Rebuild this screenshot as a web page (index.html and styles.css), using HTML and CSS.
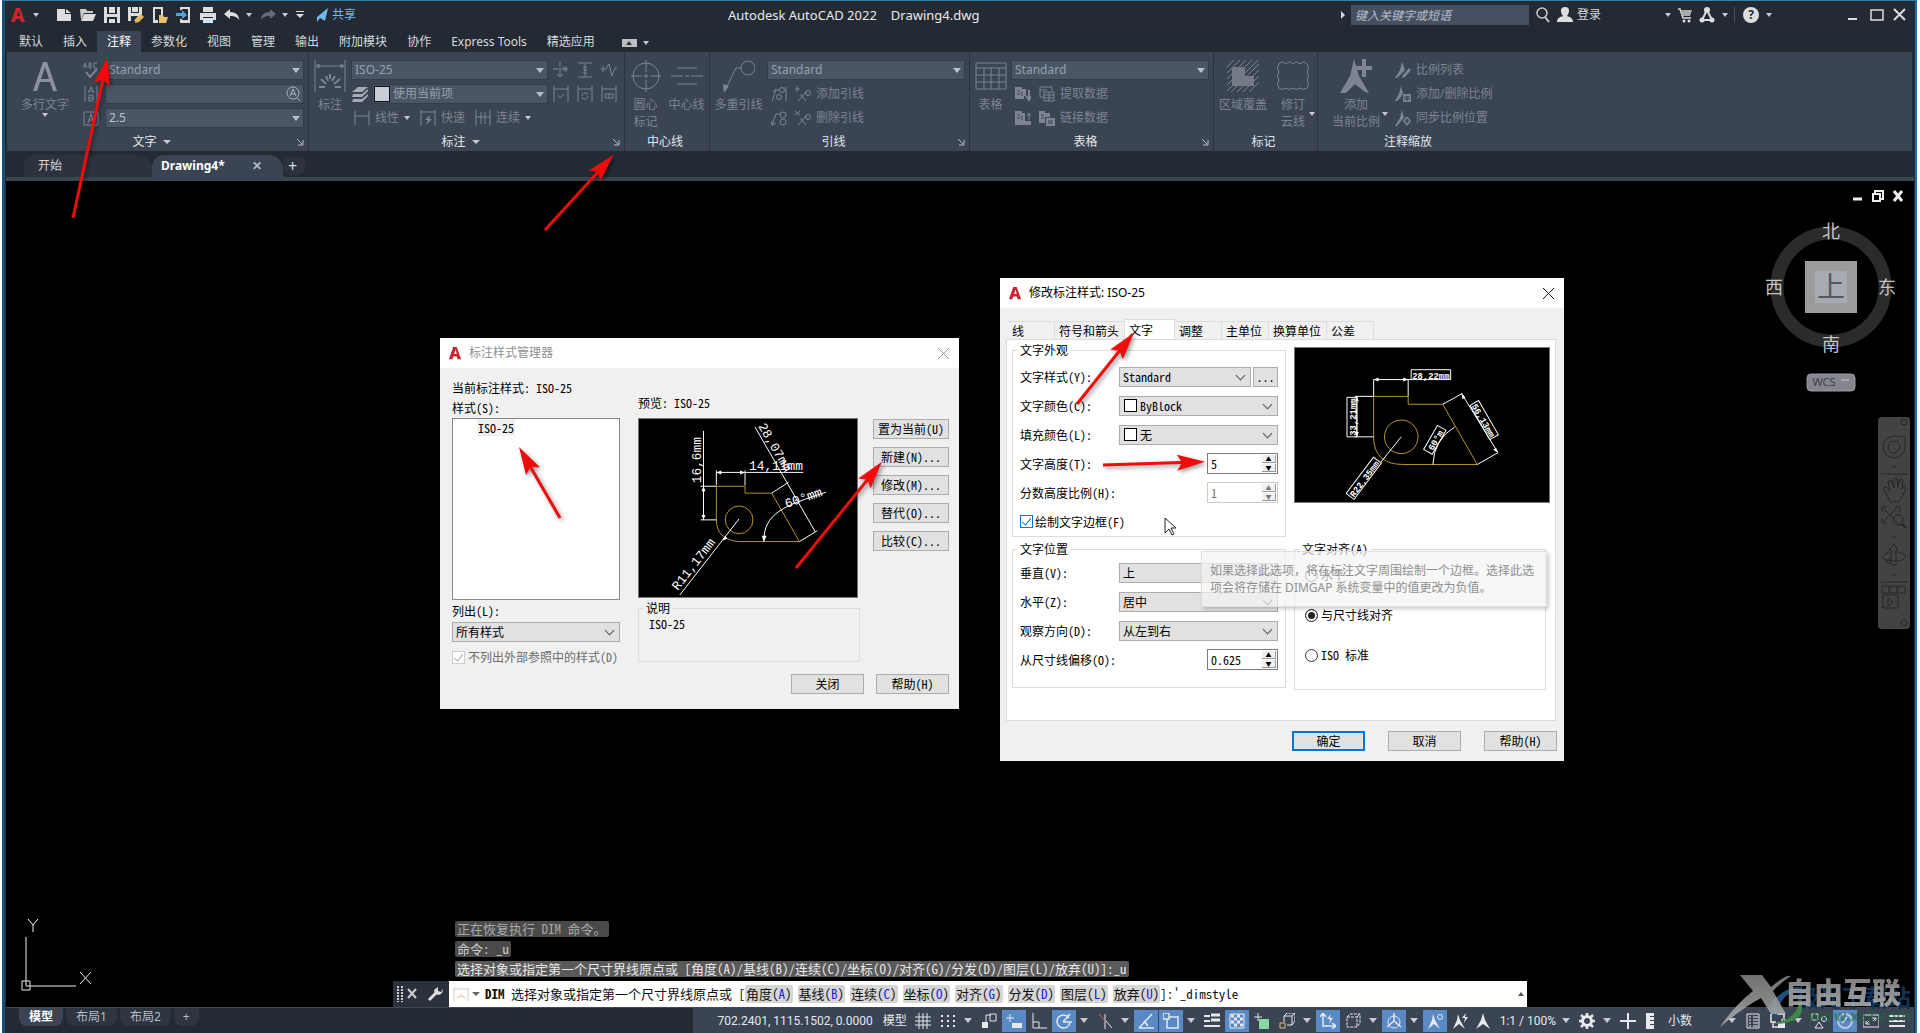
FILE: index.html
```html
<!DOCTYPE html>
<html lang="zh-CN">
<head>
<meta charset="utf-8">
<title>Autodesk AutoCAD 2022 - Drawing4.dwg</title>
<link rel="stylesheet" href="styles.css">
</head>
<body>
<svg class="defs" aria-hidden="true">
  <symbol id="logo" viewBox="0 0 16 16"><path d="M1 15L6 1h4l5 14h-4l-1-3H6l-1 3zM7 9h3L8.500 4z" fill="#c9252d" fill-rule="evenodd"/></symbol>
  <symbol id="new" viewBox="0 0 16 16"><path d="M1 2h8v5h6v7H1zM10 2l5 4h-5z" fill="#ddd"/></symbol>
  <symbol id="open" viewBox="0 0 16 16"><path d="M0 2h6l1 2h6v2H4L1 13z" fill="#ccc"/><path d="M4 7h12l-3 7H1z" fill="#ddd"/></symbol>
  <symbol id="save" viewBox="0 0 16 16"><path d="M0 0h16v16H0z" fill="#ddd"/><path d="M3 0h2v6h6V0h2v7H3zM3 10h10v6h-2v-4H5v4H3z" fill="#232a33"/><path d="M5 12h6v4H5z" fill="#ddd"/></symbol>
  <symbol id="saveas" viewBox="0 0 16 16"><path d="M0 0h14v8l-6 6H0z" fill="#ddd"/><path d="M3 0h1v5h6V0h1v6H3zM3 9h7l-4 5H3z" fill="#232a33"/><path d="M8 12l5-5 3 3-5 5-4 1z" fill="#e8b65a"/></symbol>
  <symbol id="webopen" viewBox="0 0 16 16"><path d="M1 0h10v8H9V2H3v11h3v3H1z" fill="#ddd"/><path d="M7 8h4l1 2h4l-2 6H7z" fill="#e8c069"/></symbol>
  <symbol id="websave" viewBox="0 0 16 16"><path d="M4 0h10v16H4v-4h2v1h6V2H6v1H4z" fill="#ddd"/><path d="M0 6h6V3l5 5-5 4V9H0z" fill="#4fa8dc"/></symbol>
  <symbol id="print" viewBox="0 0 16 16"><path d="M3 0h10v5H3zM0 6h16v7h-3v-3H3v3H0z" fill="#ddd"/><path d="M3 11h10v5H3z" fill="#cfe6f5"/></symbol>
  <symbol id="undo" viewBox="0 0 16 16"><path d="M0 7l6-5v3c6 0 9 3 9 8-2-3-4-4-9-4v3z" fill="#ddd"/></symbol>
  <symbol id="redo" viewBox="0 0 16 16"><path d="M16 7l-6-5v3c-6 0-9 3-9 8 2-3 4-4 9-4v3z" fill="#666c74"/></symbol>
  <symbol id="custom" viewBox="0 0 8 8"><path d="M0 0h8v1H0zM0 3h8L4 7z" fill="#ddd"/></symbol>
  <symbol id="plane" viewBox="0 0 16 16"><path d="M0 9L16 1 5 10v5l3-4 5 3 3-13" fill="#6fb9ef"/></symbol>
  <symbol id="search" viewBox="0 0 16 16"><circle cx="7" cy="6" r="5" fill="none" stroke="#ccc" stroke-width="1.500"/><path d="M10 10l4 5" stroke="#ccc" stroke-width="2"/></symbol>
  <symbol id="user" viewBox="0 0 16 16"><path d="M8 0c5 0 5 5 2 9 3 1 6 2 6 6H0c0-4 3-5 6-6C3 5 3 0 8 0z" fill="#ddd"/></symbol>
  <symbol id="cart" viewBox="0 0 16 16"><path d="M1 2h2l3 9h8" stroke="#ddd" fill="none" stroke-width="1.500"/><path d="M4 3h11l-2 6H6z" fill="#aaa"/><circle cx="7" cy="14" r="1.500" fill="#ddd"/><circle cx="12" cy="14" r="1.500" fill="#ddd"/></symbol>
  <symbol id="apps" viewBox="0 0 16 16"><path d="M8 3L3 13h10z" fill="none" stroke="#ddd" stroke-width="2"/><circle cx="8" cy="3" r="3" fill="#ddd"/><circle cx="3" cy="13" r="2.500" fill="#ddd"/><circle cx="13" cy="13" r="2.500" fill="#ddd"/></symbol>
  <symbol id="mtext" viewBox="0 0 32 34"><path d="M4 32L14 3h4l10 29h-4l-3-9H11l-3 9zM12 20h8l-4-12z" fill="currentColor" fill-rule="evenodd"/></symbol>
  <symbol id="spell" viewBox="0 0 16 16"><path d="M3 10l4 5 7-8" fill="none" stroke="currentColor" stroke-width="2"/><path d="M0 6l2-5 2 5M1 4h2M6 6V1h2v5zM6 3h2M14 1h-3v5h3" stroke="currentColor" fill="none"/></symbol>
  <symbol id="ab" viewBox="0 0 16 16"><path d="M2 0v16M14 0v16M5 7l3-6 3 6M6 5h4M6 9v6h3l1-1V9zM6 12h4" stroke="currentColor" fill="none"/></symbol>
  <symbol id="abox" viewBox="0 0 16 16"><path d="M1 2h14v13H1zM5 13l3-9 3 9M6 10h4" stroke="currentColor" fill="none"/></symbol>
  <symbol id="dimbig" viewBox="0 0 32 34"><path d="M1 1v32M31 1v32M2 7h28M5 5L2 7l3 2zM27 5l3 2-3 2z" stroke="currentColor" fill="none"/><path d="M5 28h6M21 28h6M7 20l5 5M12 17l2 5M16 15v5M21 17l-3 5M26 20l-6 5" stroke="currentColor" stroke-width="2"/></symbol>
  <symbol id="layers" viewBox="0 0 16 16"><path d="M6 1h10l-6 5H0zM1 8h9l6-5v2l-6 6H0zM1 13h9l6-5v2l-6 6H0z" fill="#a5abb4"/></symbol>
  <symbol id="dimlin" viewBox="0 0 16 16"><path d="M1 1v14M15 1v14M1 6h14" stroke="currentColor" fill="none"/></symbol>
  <symbol id="dimquick" viewBox="0 0 16 16"><path d="M1 0v16M15 0v16M1 2h14" stroke="currentColor" fill="none"/><path d="M10 5l-5 5h3l-2 5 6-6H9z" fill="currentColor"/></symbol>
  <symbol id="dimcont" viewBox="0 0 16 16"><path d="M1 0v16M6 2v12M10 2v12M15 0v16M1 7h14" stroke="currentColor" fill="none"/></symbol>
  <symbol id="dbreak" viewBox="0 0 16 16"><path d="M0 7h15M7 0v5M7 8v7M13 4v6M4 12l3 3 3-3M10 5l3 2-3 2" stroke="currentColor" fill="none"/></symbol>
  <symbol id="dspace" viewBox="0 0 16 16"><path d="M1 1h14M1 15h14M8 2v12M6 5h4M6 8h4M6 11h4" stroke="currentColor" fill="none"/></symbol>
  <symbol id="djog" viewBox="0 0 16 16"><path d="M0 7h5l3-5 3 12 3-8h2M2 4v6" stroke="currentColor" fill="none"/></symbol>
  <symbol id="dcheck" viewBox="0 0 16 16"><path d="M1 0v16M15 0v16M1 3h14M5 9l2 3 4-4" stroke="currentColor" fill="none"/></symbol>
  <symbol id="dupd" viewBox="0 0 16 16"><path d="M1 0v16M15 0v16M1 3h14M5 10c0-4 6-4 6-1M11 10c0 4-6 4-6 1" stroke="currentColor" fill="none"/></symbol>
  <symbol id="dtol" viewBox="0 0 16 16"><path d="M1 0v16M15 0v16M1 3h14M4 8h8v4H4zM8 8v4" stroke="currentColor" fill="none"/></symbol>
  <symbol id="cmark" viewBox="0 0 32 34"><circle cx="16" cy="17" r="13" fill="none" stroke="currentColor"/><path d="M16 1v12M16 15v4M16 21v12M1 17h11M14 17h4M20 17h11" stroke="currentColor"/></symbol>
  <symbol id="cline" viewBox="0 0 32 34"><path d="M6 9h20M0 17h12M14 17h4M20 17h12M6 25h20" stroke="currentColor"/></symbol>
  <symbol id="mleader" viewBox="0 0 32 34"><circle cx="25" cy="9" r="7" fill="none" stroke="currentColor"/><path d="M18 9h-5L3 29" fill="none" stroke="currentColor"/><path d="M0 25l6 2-5 7z" fill="currentColor"/></symbol>
  <symbol id="ldr" viewBox="0 0 16 16"><path d="M1 15L5 4h4M2 6l3-3M15 1v14" fill="none" stroke="currentColor"/><circle cx="11" cy="4" r="2.500" fill="none" stroke="currentColor"/><circle cx="8" cy="11" r="2.500" fill="none" stroke="currentColor"/></symbol>
  <symbol id="ldr2" viewBox="0 0 16 16"><path d="M1 15L5 4h4M0 11l1 4 4-2" fill="none" stroke="currentColor"/><circle cx="12" cy="5" r="3" fill="none" stroke="currentColor"/><circle cx="12" cy="12" r="3" fill="none" stroke="currentColor"/></symbol>
  <symbol id="ldradd" viewBox="0 0 16 16"><path d="M0 3h5M2 0v6M3 15l7-8h2M5 8l6 7" fill="none" stroke="currentColor"/><circle cx="13" cy="7" r="2.500" fill="none" stroke="currentColor"/></symbol>
  <symbol id="ldrdel" viewBox="0 0 16 16"><path d="M0 1l5 4M5 1L0 5M3 15l7-8h2M5 8l6 7" fill="none" stroke="currentColor"/><circle cx="13" cy="7" r="2.500" fill="none" stroke="currentColor"/></symbol>
  <symbol id="table" viewBox="0 0 32 34"><path d="M1 4h30v26H1zM1 9h30M1 16h30M1 23h30M9 9v21M16 9v21M24 9v21" fill="none" stroke="currentColor"/></symbol>
  <symbol id="tdown" viewBox="0 0 16 16"><path d="M0 1h7v2h4v7H9v3H0z" fill="currentColor"/><path d="M2 5h3M2 8h3M7 6v4" stroke="#3b4453"/><path d="M14 4v8M11 10l3 4 2-4" stroke="currentColor" stroke-width="2" fill="none"/></symbol>
  <symbol id="tup" viewBox="0 0 16 16"><path d="M0 1h7v2h3v8h6v4H0z" fill="currentColor"/><path d="M2 5h3M2 8h3M7 6v4" stroke="#3b4453"/><path d="M14 3v7M12 6l2-3 2 3" stroke="currentColor" fill="none"/></symbol>
  <symbol id="tlink" viewBox="0 0 16 16"><path d="M0 1h6v2h5v4H6v6H0z" fill="currentColor"/><path d="M2 5h3M2 8h3" stroke="#3b4453"/><path d="M7 8h9v8H7z" fill="currentColor"/><path d="M9 11h5M9 13h5" stroke="#3b4453"/></symbol>
  <symbol id="textract" viewBox="0 0 16 16"><path d="M1 1h12v4M1 1v10h4M1 4h7M5 6h10v9H5zM5 9h10M5 12h10M10 6v9" fill="none" stroke="currentColor"/></symbol>
  <symbol id="wipe" viewBox="0 0 32 34"><path d="M0 8l7-7M0 14L13 1M0 20L19 1M0 26L25 1M0 32L31 1M4 33L32 5M10 33l22-22M16 33l16-16M22 33l10-10" stroke="currentColor"/><path d="M5 8h13v9h9v10H5z" fill="#737b87"/></symbol>
  <symbol id="cloud" viewBox="0 0 32 34"><path d="M2 5q3-4 7 0q3-4 7 0q3-4 7 0q4-4 7 0q3 3 0 8q3 4 0 8q3 4 0 8q-4 3-7 0q-4 3-7 0q-4 3-7 0q-4 3-7 0q-3-4 0-8q-3-4 0-8q-3-4 0-8z" fill="none" stroke="currentColor"/></symbol>
  <symbol id="annobig" viewBox="0 0 32 34"><path d="M14 0l5 17 10 17-4-1-10-8-9 9H0l10-17z" fill="currentColor"/><path d="M24 0v18M16 9h16" stroke="currentColor" stroke-width="4"/></symbol>
  <symbol id="anno1" viewBox="0 0 16 16"><path d="M7 0l3 8-3 3-5 5H0l5-8zM14 6l2 2-6 7-3 1 1-3z" fill="currentColor"/></symbol>
  <symbol id="anno2" viewBox="0 0 16 16"><path d="M6 0l2 7-2 4-4 4H0l4-7z" fill="currentColor"/><path d="M8 8h8v8H8z" fill="currentColor"/><path d="M9 11h6M9 13h6M12 10v5" stroke="#3b4453"/></symbol>
  <symbol id="anno3" viewBox="0 0 16 16"><path d="M7 0l2 8-3 3-4 5H0l5-8z" fill="currentColor"/><path d="M12 7l-3 4 3 4M12 7l3 4-3 4" stroke="currentColor" fill="none" stroke-width="1.500"/></symbol>
  <symbol id="launch" viewBox="0 0 8 8"><path d="M1 1l5 5M7 2v5H2" stroke="#b8bec6" fill="none"/></symbol>
  <symbol id="s-grid" viewBox="0 0 16 16"><path d="M4 0v16M8 0v16M12 0v16M0 4h16M0 8h16M0 12h16" stroke="currentColor"/></symbol>
  <symbol id="s-dots" viewBox="0 0 16 16"><path d="M1 3h14M1 8h14M1 13h14" stroke="currentColor" stroke-width="2" stroke-dasharray="2 4"/></symbol>
  <symbol id="s-infer" viewBox="0 0 16 16"><path d="M1 9h6v6H1z" fill="currentColor"/><path d="M5 9V2h5M9 1h6v7H9z" stroke="currentColor" fill="none"/></symbol>
  <symbol id="s-dyn" viewBox="0 0 16 16"><path d="M0 5h8M4 1v8" stroke="currentColor"/><path d="M6 10h10v5H6z" fill="currentColor"/></symbol>
  <symbol id="s-ortho" viewBox="0 0 16 16"><path d="M2 0v15h14M2 9h6v6" stroke="currentColor" fill="none"/></symbol>
  <symbol id="s-polar" viewBox="0 0 16 16"><path d="M13 5a6.500 6.500 0 1 0 1 4M7 9h9M7 9l7-8" stroke="currentColor" fill="none" stroke-width="1.500"/></symbol>
  <symbol id="s-iso" viewBox="0 0 16 16"><path d="M8 1v15M9 8l6 7" stroke="currentColor"/><path d="M2 1l6 7" stroke="#d66"/></symbol>
  <symbol id="s-track" viewBox="0 0 16 16"><path d="M1 15L14 1M1 15h15M6 8l4 5" stroke="currentColor" stroke-width="1.500"/></symbol>
  <symbol id="s-osnap" viewBox="0 0 16 16"><path d="M6 4h9v11H4V6M0 0h6v6H0z" stroke="currentColor" fill="none" stroke-width="1.500"/></symbol>
  <symbol id="s-lwt" viewBox="0 0 16 16"><path d="M0 3h6M0 8h6M0 13h16" stroke="currentColor" stroke-width="2"/><path d="M7 2h9M7 7h9" stroke="currentColor" stroke-width="3"/></symbol>
  <symbol id="s-trans" viewBox="0 0 16 16"><path d="M1 1h14v14H1z" stroke="currentColor" fill="none"/><path d="M2 3h12M2 9h12" stroke="currentColor" stroke-width="3" stroke-dasharray="3 3"/><path d="M5 6h10M5 12h10" stroke="currentColor" stroke-width="3" stroke-dasharray="3 3"/></symbol>
  <symbol id="s-cyc" viewBox="0 0 16 16"><path d="M0 4h8M4 0v8" stroke="currentColor"/><path d="M5 6h10v10H5z" fill="#86d9a5"/></symbol>
  <symbol id="s-cube" viewBox="0 0 16 16"><path d="M5 3l3-3h8v8l-3 4H8M5 3v6M5 3h8v9M13 3l3-3" stroke="currentColor" fill="none"/><path d="M1 10h5v5H1z" stroke="#e8b878" fill="none"/></symbol>
  <symbol id="s-ducs" viewBox="0 0 16 16"><path d="M3 1v12h12M0 4l3-4 3 4M12 10l4 3-4 3" stroke="currentColor" fill="none" stroke-width="1.500"/><path d="M11 1L7 6h3l-1 5 4-6h-3z" fill="currentColor"/></symbol>
  <symbol id="s-filt" viewBox="0 0 16 16"><path d="M2 4l3-3h10v9l-3 4H2zM2 4h10v10M12 4l3-3" stroke="currentColor" fill="none" stroke-dasharray="3 1"/></symbol>
  <symbol id="s-gizmo" viewBox="0 0 16 16"><circle cx="8" cy="9" r="6" stroke="currentColor" fill="none"/><path d="M8 0v8l-7 6M8 8l7 6" stroke="currentColor" fill="none" stroke-width="1.500"/></symbol>
  <symbol id="s-anno" viewBox="0 0 16 16"><path d="M8 0l2 7 5 9-7-5-7 5 5-9z" fill="currentColor"/></symbol>
  <symbol id="s-annov" viewBox="0 0 16 16"><path d="M6 1l2 6 5 9-6-5-6 5 4-9z" fill="currentColor"/><circle cx="13" cy="4" r="2.500" stroke="currentColor" fill="none"/></symbol>
  <symbol id="s-annoa" viewBox="0 0 16 16"><path d="M6 1l2 6 5 9-6-5-6 5 4-9zM14 0l-4 5h3l-1 5 4-6h-3z" fill="currentColor"/></symbol>
  <symbol id="s-gear" viewBox="0 0 16 16"><circle cx="8" cy="8" r="4.500" stroke="currentColor" fill="none" stroke-width="3"/><path d="M8 0v3M8 13v3M0 8h3M13 8h3M2 2l3 3M11 11l3 3M14 2l-3 3M2 14l3-3" stroke="currentColor" stroke-width="2.500"/></symbol>
  <symbol id="s-plus" viewBox="0 0 16 16"><path d="M8 0v16M0 8h16" stroke="currentColor" stroke-width="2"/></symbol>
  <symbol id="s-ruler" viewBox="0 0 16 16"><path d="M4 0h8v3H8v1h4v3H8v1h4v3H8v1h4v4H4z" fill="currentColor"/></symbol>
  <symbol id="s-prop" viewBox="0 0 16 16"><path d="M2 1h12v14H2zM4 4h2M8 4h5M4 7h2M8 7h5M4 10h2M8 10h5M4 13h2M8 13h5" stroke="currentColor" fill="none"/></symbol>
  <symbol id="s-lock" viewBox="0 0 16 16"><path d="M1 1h13v4M1 1v8h5M3 9v5h5" stroke="currentColor" fill="none" stroke-width="1.500"/><path d="M8 9h7v6H8z" fill="currentColor"/><path d="M12 9V6h3v2" stroke="currentColor" fill="none"/></symbol>
  <symbol id="s-iso2" viewBox="0 0 16 16"><path d="M1 1h6v6H1zM8 9l4 6H4z" stroke="currentColor" fill="none"/><circle cx="13" cy="6" r="2.500" stroke="currentColor" fill="none"/></symbol>
  <symbol id="s-perf" viewBox="0 0 16 16"><circle cx="8" cy="8" r="7" stroke="#b4c8dc" fill="none" stroke-width="2"/><path d="M5 10l5-6" stroke="#b4c8dc" stroke-width="2"/></symbol>
  <symbol id="s-full" viewBox="0 0 16 16"><path d="M0 2h16v12H0zM9 5h4v3M13 5l-3 3M3 8v3h4M3 11l3-3" stroke="currentColor" fill="none"/></symbol>
  <symbol id="s-menu" viewBox="0 0 16 16"><path d="M0 3h16M0 8h16M0 13h16" stroke="currentColor" stroke-width="2"/></symbol>
</svg>

<div class="window">
  <header class="titlebar">
    <div class="quick">
      <button class="app" aria-label="应用程序"><svg><use href="#logo"/></svg><i class="caret"></i></button>
      <button class="q" aria-label="新建"><svg><use href="#new"/></svg></button>
      <button class="q" aria-label="打开"><svg><use href="#open"/></svg></button>
      <button class="q" aria-label="保存"><svg><use href="#save"/></svg></button>
      <button class="q" aria-label="另存为"><svg><use href="#saveas"/></svg></button>
      <button class="q" aria-label="从 Web 打开"><svg><use href="#webopen"/></svg></button>
      <button class="q" aria-label="保存到 Web"><svg><use href="#websave"/></svg></button>
      <button class="q" aria-label="打印"><svg><use href="#print"/></svg></button>
      <button class="q wide" aria-label="放弃"><svg><use href="#undo"/></svg><i class="caret"></i></button>
      <button class="q wide" aria-label="重做"><svg><use href="#redo"/></svg><i class="caret"></i></button>
      <button class="q narrow" aria-label="自定义"><svg><use href="#custom"/></svg></button>
      <button class="share"><svg><use href="#plane"/></svg>共享</button>
    </div>
    <h1 class="doc-title"><span>Autodesk AutoCAD 2022</span><span>Drawing4.dwg</span></h1>
    <div class="account">
      <i class="caret right"></i>
      <input class="help-search" type="text" placeholder="键入关键字或短语" aria-label="搜索">
      <button aria-label="搜索"><svg><use href="#search"/></svg></button>
      <button class="login"><svg><use href="#user"/></svg>登录</button>
      <i class="caret"></i>
      <button aria-label="商店"><svg><use href="#cart"/></svg></button>
      <button class="drop" aria-label="应用"><svg><use href="#apps"/></svg><i class="caret"></i></button>
      <button class="drop help" aria-label="帮助"><b>?</b><i class="caret"></i></button>
    </div>
    <div class="wincontrols">
      <button aria-label="最小化"><svg viewBox="0 0 14 14"><path d="M1 11h9" stroke="#ddd" stroke-width="2"/></svg></button>
      <button aria-label="最大化"><svg viewBox="0 0 14 14"><path d="M1 2h12v10H1z" fill="none" stroke="#ddd" stroke-width="1.500"/></svg></button>
      <button aria-label="关闭"><svg viewBox="0 0 14 14"><path d="M1 1l11 11M12 1L1 12" stroke="#ddd" stroke-width="2"/></svg></button>
    </div>
  </header>

  <nav class="menu">
    <a href="#">默认</a><a href="#">插入</a><a href="#" class="on">注释</a><a href="#">参数化</a><a href="#">视图</a><a href="#">管理</a><a href="#">输出</a><a href="#">附加模块</a><a href="#">协作</a><a href="#">Express Tools</a><a href="#">精选应用</a>
    <button class="collapse" aria-label="最小化功能区"><span></span><i class="caret"></i></button>
  </nav>

  <section class="ribbon">
    <div class="panel p-text">
      <div class="tools">
        <button class="big"><svg class="strong"><use href="#mtext"/></svg>多行文字<i class="caret"></i></button>
        <div class="stack icons"><svg><use href="#spell"/></svg><svg><use href="#ab"/></svg><svg><use href="#abox"/></svg></div>
        <div class="stack grow">
          <div class="combo"><select aria-label="文字样式"><option>Standard</option></select></div>
          <div class="combo find"><input type="text" aria-label="查找文字"><svg viewBox="0 0 16 16"><circle cx="8" cy="7" r="6" fill="none" stroke="#aab2bd"/><path d="M5 10l3-7 3 7M6 8h4M12 12l3 3" stroke="#aab2bd" fill="none"/></svg></div>
          <div class="combo light"><select aria-label="文字高度"><option>2.5</option></select></div>
        </div>
      </div>
      <footer><span>文字<i class="caret"></i></span><svg><use href="#launch"/></svg></footer>
    </div>
    <div class="panel p-dim">
      <div class="tools">
        <button class="big"><svg><use href="#dimbig"/></svg>标注</button>
        <div class="stack grow">
          <div class="combo"><select aria-label="标注样式"><option>ISO-25</option></select></div>
          <div class="line tight"><svg><use href="#layers"/></svg><div class="combo swatch"><i></i><select aria-label="标注图层"><option>使用当前项</option></select></div></div>
          <div class="line dims"><button><svg><use href="#dimlin"/></svg>线性<i class="caret"></i></button><button><svg><use href="#dimquick"/></svg>快速</button><button><svg><use href="#dimcont"/></svg>连续<i class="caret"></i></button></div>
        </div>
        <div class="icongrid"><svg><use href="#dbreak"/></svg><svg><use href="#dspace"/></svg><svg><use href="#djog"/></svg><svg><use href="#dcheck"/></svg><svg><use href="#dupd"/></svg><svg><use href="#dtol"/></svg></div>
      </div>
      <footer><span>标注<i class="caret"></i></span><svg><use href="#launch"/></svg></footer>
    </div>
    <div class="panel p-center">
      <div class="tools">
        <button class="big"><svg><use href="#cmark"/></svg>圆心<br>标记</button>
        <button class="big"><svg><use href="#cline"/></svg>中心线</button>
      </div>
      <footer><span>中心线</span></footer>
    </div>
    <div class="panel p-leader">
      <div class="tools">
        <button class="big"><svg><use href="#mleader"/></svg>多重引线</button>
        <div class="stack grow">
          <div class="combo"><select aria-label="多重引线样式"><option>Standard</option></select></div>
          <div class="line"><svg><use href="#ldr"/></svg><button><svg><use href="#ldradd"/></svg>添加引线</button></div>
          <div class="line"><svg><use href="#ldr2"/></svg><button><svg><use href="#ldrdel"/></svg>删除引线</button></div>
        </div>
      </div>
      <footer><span>引线</span><svg><use href="#launch"/></svg></footer>
    </div>
    <div class="panel p-table">
      <div class="tools">
        <button class="big"><svg><use href="#table"/></svg>表格</button>
        <div class="stack grow">
          <div class="combo"><select aria-label="表格样式"><option>Standard</option></select></div>
          <div class="line"><svg><use href="#tdown"/></svg><button><svg><use href="#textract"/></svg>提取数据</button></div>
          <div class="line"><svg><use href="#tup"/></svg><button><svg><use href="#tlink"/></svg>链接数据</button></div>
        </div>
      </div>
      <footer><span>表格</span><svg><use href="#launch"/></svg></footer>
    </div>
    <div class="panel p-mark">
      <div class="tools">
        <button class="big"><svg><use href="#wipe"/></svg>区域覆盖</button>
        <button class="big side"><svg><use href="#cloud"/></svg>修订<br>云线<i class="caret"></i></button>
      </div>
      <footer><span>标记</span></footer>
    </div>
    <div class="panel p-anno">
      <div class="tools">
        <button class="big side"><svg><use href="#annobig"/></svg>添加<br>当前比例<i class="caret"></i></button>
        <div class="stack grow">
          <div class="line"><button><svg><use href="#anno1"/></svg>比例列表</button></div>
          <div class="line"><button><svg><use href="#anno2"/></svg>添加/删除比例</button></div>
          <div class="line"><button><svg><use href="#anno3"/></svg>同步比例位置</button></div>
        </div>
      </div>
      <footer><span>注释缩放</span></footer>
    </div>
  </section>

  <nav class="doctabs">
    <a href="#" class="start">开始</a>
    <a href="#" class="active">Drawing4*<i>✕</i></a>
    <button class="add" aria-label="新图形">+</button>
  </nav>

  <main class="canvas">
    <div class="viewcontrols">
      <svg viewBox="0 0 12 12"><path d="M1 9h9" stroke="#eee" stroke-width="3"/></svg>
      <svg viewBox="0 0 12 12"><path d="M3 3V1h8v8H9M1 4h7v7H1z" fill="none" stroke="#eee" stroke-width="2"/></svg>
      <svg viewBox="0 0 12 12"><path d="M2 1l8 10M10 1L2 11" stroke="#eee" stroke-width="3"/></svg>
    </div>

    <svg class="viewcube" viewBox="0 0 140 180">
      <circle cx="70" cy="70" r="54" fill="none" stroke="#2b2b2b" stroke-width="13"/>
      <path d="M44 44h52v52H44z" fill="#9b9b9b"/><path d="M54 54h32v32H54z" fill="#a8aab2"/>
      <text x="70" y="21">北</text><text x="13" y="77">西</text><text x="126" y="77">东</text><text x="70" y="134">南</text>
      <text x="70" y="80" class="face">上</text>
      <rect x="46" y="157" width="48" height="17" rx="4" fill="#85858e" stroke="#9a9aa2"/>
      <text x="63" y="169" class="wcs">WCS</text><path d="M80 163h8" stroke="#a9a9b2" stroke-width="2"/>
    </svg>

    <aside class="navbar">
      <svg viewBox="0 0 32 212">
        <circle cx="26" cy="5" r="3"/><path d="M27 20v10a11 11 0 1 1-11-11z"/><circle cx="16" cy="30" r="6"/><path d="M14 50h4M3 57h26M14 120h4M14 158h4M3 165h26" />
        <path d="M9 78l-4-7 3-1 4 4-2-10 3-1 3 8V61h3l1 9 2-8 3 1-1 9 3-4 1 3-4 9-4 5h-8z"/>
        <path d="M5 91l18 18M19 91L5 105M4 95v-5h5M17 90h5v5M4 101v5h5"/><circle cx="20" cy="103" r="5"/><path d="M24 107l4 4" stroke-width="2"/>
        <path d="M13 148v-15h-2l5-6 4 6h-2v15zM11 135c-10 4-8 9 5 9s16-6 5-9M12 141l-4 3 4 3"/>
        <path d="M4 169h7v7H4zM12 169h7v7h-7zM20 169h7v7h-7zM5 178h15v13H5zM10 181l5 4-5 4z"/><circle cx="26" cy="206" r="3"/>
      </svg>
    </aside>

    <svg class="ucs" viewBox="0 0 76 70"><path d="M8 3l5 6 5-6M13 9v7M6 21v49M6 70h50M2 65h8v9H2zM60 56l11 12M71 56L60 68" fill="none" stroke="#eee"/></svg>

    <section class="dialog manager" aria-label="标注样式管理器">
      <header><svg><use href="#logo"/></svg><h2>标注样式管理器</h2><button class="x" aria-label="关闭窗口"><svg viewBox="0 0 12 12"><path d="M0 0l12 12M12 0L0 12" stroke="currentColor"/></svg></button></header>
      <div class="cols">
        <div class="left">
          <p>当前标注样式: ISO-25</p>
          <p>样式(S):</p>
          <ul class="list"><li><span>ISO-25</span></li></ul>
          <label class="lbl" for="list-of">列出(L):</label>
          <div class="drop-field"><select id="list-of"><option>所有样式</option></select></div>
          <label class="check muted"><input type="checkbox" checked disabled>不列出外部参照中的样式(D)</label>
        </div>
        <div class="mid">
          <p>预览: ISO-25</p>
          <svg class="preview" viewBox="0 0 220 180">
            <path d="M78 102V68h29v7h27l28 49h-61Q78 122 78 102z" class="y"/><circle cx="101" cy="102" r="14" class="y"/>
            <path d="M78 67V52M107 67V52M78 54h88M65 12v90M62 68h16M62 102h16M117 8l61 106M134 75l17-11M162 124l18-11M126 124C126 95 146 88 189 74M101 101L41 178"/>
            <path d="M78 54l5-2v4zM107 54l-5-2v4zM65 68l-2 5h4zM65 102l-2-5h4zM126 124l-2-6h5zM84 123l5-2-2-3z" class="f"/>
            <text x="111" y="52">14,11mm</text>
            <text transform="translate(62 65) rotate(-90)">16,6mm</text>
            <text transform="translate(120 7) rotate(60)">28,07mm</text>
            <text transform="translate(149 90) rotate(-19)">60°mm</text>
            <text transform="translate(39 174) rotate(-52)">R11,17mm</text>
          </svg>
          <fieldset><legend>说明</legend><p>ISO-25</p></fieldset>
        </div>
        <div class="side-buttons">
          <button>置为当前(U)</button><button>新建(N)...</button><button>修改(M)...</button><button>替代(O)...</button><button>比较(C)...</button>
        </div>
      </div>
      <div class="actions"><button>关闭</button><button>帮助(H)</button></div>
    </section>

    <section class="dialog modify" aria-label="修改标注样式">
      <header><svg><use href="#logo"/></svg><h2>修改标注样式: ISO-25</h2><button class="x" aria-label="关闭窗口"><svg viewBox="0 0 12 12"><path d="M0 0l12 12M12 0L0 12" stroke="currentColor"/></svg></button></header>
      <div class="tabs">
        <button>线</button><button>符号和箭头</button><button class="on">文字</button><button>调整</button><button>主单位</button><button>换算单位</button><button>公差</button>
      </div>
      <div class="page">
        <fieldset class="look"><legend>文字外观</legend>
          <div class="row"><label for="f-style">文字样式(Y):</label><div class="drop-field"><select id="f-style"><option>Standard</option></select></div><button class="more">...</button></div>
          <div class="row"><label for="f-color">文字颜色(C):</label><div class="drop-field boxed"><select id="f-color"><option>ByBlock</option></select></div></div>
          <div class="row"><label for="f-fill">填充颜色(L):</label><div class="drop-field boxed"><select id="f-fill"><option>无</option></select></div></div>
          <div class="row"><label for="f-height">文字高度(T):</label><div class="spin"><input id="f-height" type="text" value="5"><span><button aria-label="增加">▲</button><button aria-label="减少">▼</button></span></div></div>
          <div class="row"><label for="f-frac">分数高度比例(H):</label><div class="spin off"><input id="f-frac" type="text" value="1" disabled><span><button disabled aria-label="增加">▲</button><button disabled aria-label="减少">▼</button></span></div></div>
          <label class="row check"><input type="checkbox" checked>绘制文字边框(F)</label>
        </fieldset>
        <svg class="preview" viewBox="0 0 256 156">
          <path d="M79 90V49h35v8h35l35 61h-75Q79 118 79 90z" class="y"/><circle cx="107" cy="90" r="17" class="y"/>
          <path d="M79 49V32h38M114 49V32M62 49v41M60 49h19M60 90h19M168 46l37 60M149 57l20-11M184 118l21-12M139 118Q140 93 161 80M107 90L86 116"/>
          <path d="M79 32l5-2v4zM114 32l-5-2v4zM62 49l-2 5h4zM62 90l-2-5h4zM168 46l1 6 3-2zM205 106l-5-3 3-2z" class="f"/>
          <g transform="translate(137 27)"><path d="M-20-5h40V5h-40z"/><text y="4">28,22mm</text></g>
          <g transform="translate(57 70) rotate(-90)"><path d="M-20-5h40V5h-40z"/><text y="4">33,21mm</text></g>
          <g transform="translate(191 73) rotate(60)"><path d="M-20-5h40V5h-40z"/><text y="4">56,13mm</text></g>
          <g transform="translate(141 93) rotate(-60)"><path d="M-14-5h28V5h-28z"/><text y="4">60°m</text></g>
          <g transform="translate(69 132) rotate(-53)"><path d="M-23-5h46V5h-46z"/><text y="4">R22,35mm</text></g>
        </svg>
        <fieldset class="place"><legend>文字位置</legend>
          <div class="row"><label for="f-v">垂直(V):</label><div class="drop-field"><select id="f-v"><option>上</option></select></div></div>
          <div class="row"><label for="f-h">水平(Z):</label><div class="drop-field"><select id="f-h"><option>居中</option></select></div></div>
          <div class="row"><label for="f-d">观察方向(D):</label><div class="drop-field"><select id="f-d"><option>从左到右</option></select></div></div>
          <div class="row"><label for="f-o">从尺寸线偏移(O):</label><div class="spin"><input id="f-o" type="text" value="0.625"><span><button aria-label="增加">▲</button><button aria-label="减少">▼</button></span></div></div>
        </fieldset>
        <fieldset class="align"><legend>文字对齐(A)</legend>
          <label><input type="radio" name="al">水平</label>
          <label><input type="radio" name="al" checked>与尺寸线对齐</label>
          <label><input type="radio" name="al">ISO 标准</label>
        </fieldset>
      </div>
      <div class="actions"><button class="default">确定</button><button>取消</button><button>帮助(H)</button></div>
      <div class="tooltip" role="tooltip">如果选择此选项，将在标注文字周围绘制一个边框。选择此选项会将存储在 DIMGAP 系统变量中的值更改为负值。</div>
      <svg class="cursor" viewBox="0 0 13 20"><path d="M1 1v15l4-4 3 6 2-1-3-6h5z" fill="#fff" stroke="#222"/></svg>
    </section>

    <div class="command">
      <p class="h1">正在恢复执行 DIM 命令。</p>
      <p class="h2">命令: _u</p>
      <p class="h3">选择对象或指定第一个尺寸界线原点或 [角度(A)/基线(B)/连续(C)/坐标(O)/对齐(G)/分发(D)/图层(L)/放弃(U)]:_u</p>
      <div class="cmdline">
        <div class="grip">
          <svg viewBox="0 0 56 26"><path d="M5 5v16M9 5v16" stroke="#ccc" stroke-width="2" stroke-dasharray="2 1"/><path d="M15 8l8 9M23 8l-8 9" stroke="#ccc" stroke-width="2"/><path d="M36 19l8-8" stroke="#ddd" stroke-width="3"/><path d="M41 9l4-3v4l3 1 2-3c0 5-4 7-8 5z" fill="#ddd"/></svg>
        </div>
        <svg class="cmdicon" viewBox="0 0 16 16"><path d="M1 1v14M15 1v14M1 3h14" stroke="#ccc" fill="none"/><path d="M4 12l3-2M8 8v3M12 12l-3-2" stroke="#e6b478"/></svg><i class="caret dark"></i>
        <div class="prompt"><b>DIM</b> 选择对象或指定第一个尺寸界线原点或 [<button>角度(<em>A</em>)</button><button>基线(<em>B</em>)</button><button>连续(<em>C</em>)</button><button>坐标(<em>O</em>)</button><button>对齐(<em>G</em>)</button><button>分发(<em>D</em>)</button><button>图层(<em>L</em>)</button><button>放弃(<em>U</em>)</button>]:</div>
        <input type="text" aria-label="命令" value="'_dimstyle">
        <i class="caret up"></i>
      </div>
    </div>
  </main>

  <footer class="bottom">
    <nav class="layouts"><a href="#" class="on">模型</a><a href="#">布局1</a><a href="#">布局2</a><a href="#" class="plus">+</a></nav>
    <div class="status">
      <span class="coords">702.2401, 1115.1502, 0.0000</span>
      <button class="word">模型</button>
      <div class="g"><button aria-label="栅格"><svg><use href="#s-grid"/></svg></button><button aria-label="捕捉"><svg><use href="#s-dots"/></svg></button><i class="caret"></i></div>
      <div class="g"><button aria-label="推断约束"><svg><use href="#s-infer"/></svg></button><button class="on" aria-label="动态输入"><svg><use href="#s-dyn"/></svg></button><button aria-label="正交"><svg><use href="#s-ortho"/></svg></button><button class="on" aria-label="极轴"><svg><use href="#s-polar"/></svg></button><i class="caret"></i></div>
      <div class="g"><button aria-label="等轴测"><svg><use href="#s-iso"/></svg></button><i class="caret"></i></div>
      <div class="g"><button class="on" aria-label="追踪"><svg><use href="#s-track"/></svg></button><button class="on" aria-label="对象捕捉"><svg><use href="#s-osnap"/></svg></button><i class="caret"></i></div>
      <div class="g"><button aria-label="线宽"><svg><use href="#s-lwt"/></svg></button><button class="on" aria-label="透明度"><svg><use href="#s-trans"/></svg></button><button aria-label="选择循环"><svg><use href="#s-cyc"/></svg></button><button aria-label="三维捕捉"><svg><use href="#s-cube"/></svg></button><i class="caret"></i></div>
      <div class="g"><button class="on" aria-label="动态UCS"><svg><use href="#s-ducs"/></svg></button><button aria-label="过滤"><svg><use href="#s-filt"/></svg></button><i class="caret"></i></div>
      <div class="g"><button class="on" aria-label="小控件"><svg><use href="#s-gizmo"/></svg></button><i class="caret"></i></div>
      <div class="g"><button class="on" aria-label="注释可见性"><svg><use href="#s-annov"/></svg></button><button aria-label="自动缩放"><svg><use href="#s-annoa"/></svg></button><button class="scale"><svg><use href="#s-anno"/></svg>1:1 / 100%</button><i class="caret"></i></div>
      <div class="g"><button aria-label="工作空间"><svg><use href="#s-gear"/></svg></button><i class="caret"></i></div>
      <div class="g"><button aria-label="注释监视器"><svg><use href="#s-plus"/></svg></button></div>
      <div class="g units"><button><svg><use href="#s-ruler"/></svg>小数</button><i class="caret"></i></div>
      <div class="g"><button aria-label="快捷特性"><svg><use href="#s-prop"/></svg></button><button aria-label="锁定"><svg><use href="#s-lock"/></svg></button><i class="caret"></i></div>
      <div class="g"><button aria-label="隔离对象"><svg><use href="#s-iso2"/></svg></button><button class="on" aria-label="硬件加速"><svg><use href="#s-perf"/></svg></button><button aria-label="全屏显示"><svg><use href="#s-full"/></svg></button><button aria-label="自定义"><svg><use href="#s-menu"/></svg></button></div>
    </div>
  </footer>
</div>

<svg class="watermark" viewBox="0 0 200 60">
  <defs><linearGradient id="mg" x1="0" y1="0" x2="0" y2="1"><stop offset="0" stop-color="#858585"/><stop offset="1" stop-color="#b4b4b4"/></linearGradient></defs>
  <text x="76" y="33" class="blue">极光下载站</text>
  <path d="M53 27Q75 8 84 17Q58 18 57 46Q46 40 53 27z" fill="#234f7d"/>
  <path d="M50 51Q78 48 80 25Q90 52 50 51z" fill="#3c8a45"/>
  <text x="88" y="48" class="green">www.xz7.com</text>
  <path d="M20 2h22l9 12Q66 1 71 3Q59 11 53 18l13 23H51L41 25Q24 34 0 54Q14 33 33 18z" fill="url(#mg)" opacity=".85"/>
  <text x="65" y="31" class="main" fill="url(#mg)">自由互联</text>
</svg>

<svg class="arrows" width="1220" height="580" viewBox="0 0 1220 580">
  <defs><marker id="head" viewBox="0 0 28 18" refX="20" refY="9" markerWidth="28" markerHeight="18" markerUnits="userSpaceOnUse" orient="auto"><path d="M28 9L0 1l5 8-5 8z" fill="#f00c0c"/></marker></defs>
  <path d="M73 218L106 65"/><path d="M545 230L608 161"/><path d="M560 518L523 454"/><path d="M796 568L877 468"/><path d="M1077 404L1129 339"/><path d="M1103 465l94-3"/>
</svg>
</body>
</html>
```
FILE: styles.css
```css
* { box-sizing: border-box; }
body {
  margin: 0;
  background: #fff;
  color: #d5d9de;
  font: 12px/16px "Noto Sans", "Noto Sans CJK SC", sans-serif;
}
button, input, select { font: inherit; color: inherit; background: none; border: 0; padding: 0; margin: 0; border-radius: 0; }
button { white-space: nowrap; }
input { min-width: 0; }
a { color: inherit; text-decoration: none; }
p, h1, h2, ul, fieldset { margin: 0; padding: 0; }
ul { list-style: none; }
svg { width: 16px; height: 16px; flex: none; display: block; overflow: visible; }
.defs { position: absolute; width: 0; height: 0; }

.caret { width: 0; height: 0; flex: none; display: inline-block; border: 3px solid transparent; border-top: 4px solid #c5cad1; border-bottom: 0; }
.caret.right { border: 4px solid transparent; border-left: 4px solid #d5d9de; border-right: 0; }
.caret.dark { border-top-color: #666; }
.caret.up { border-top: 0; border-bottom: 4px solid #555; }

.window {
  display: flex;
  flex-direction: column;
  min-height: 100vh;
  margin: 0 3px 0 2px;
  border-top: 1px solid #2c86ab;
  border-left: 3px solid #16507a;
  border-right: 2px solid #1c6ea4;
  background: #232a33;
}

/* title bar */
.titlebar { display: flex; align-items: center; height: 28px; padding-left: 5px; }
.quick, .account, .wincontrols, .quick button, .account button { display: flex; align-items: center; }
.quick { flex: 0 1 718px; }
.quick .app { width: 42px; gap: 7px; }
.quick .q { width: 24px; justify-content: center; }
.quick .q.wide { width: 36px; gap: 6px; }
.quick .q.narrow { width: 16px; }
.quick .narrow svg { width: 8px; height: 8px; }
.share { gap: 4px; color: #6fb9ef; margin-left: 4px; }
.doc-title { display: flex; gap: 14px; font-size: 13px; font-weight: 400; color: #e8eaed; }
.account { flex: 1; justify-content: flex-end; gap: 6px; }
.help-search { width: 178px; height: 20px; padding: 0 4px; background: #465063; font-style: italic; }
.help-search::placeholder { color: #b9c0ca; opacity: 1; }
.login { gap: 4px; margin-right: 58px; }
.drop { gap: 7px; }
.help { gap: 7px; padding-left: 8px; border-left: 1px solid #4a515b; }
.help b { width: 16px; height: 16px; border-radius: 8px; background: #ddd; color: #232a33; }
.wincontrols { width: 143px; justify-content: flex-end; gap: 9px; padding-right: 8px; }
.wincontrols svg { width: 14px; height: 14px; }

/* ribbon tabs */
.menu { display: flex; align-items: flex-end; height: 23px; padding-left: 4px; }
.menu a { padding: 3px 10px 2px; }
.menu a.on { background: #3b4453; color: #fff; }
.collapse { display: flex; align-items: center; gap: 6px; height: 18px; margin-left: 17px; }
.collapse span { width: 15px; height: 8px; background: #bcc0c5; border: 2px solid #bcc0c5; }
.collapse span::after { content: ""; display: block; margin: 0 auto; width: 0; border: 3px solid transparent; border-top: 0; border-bottom: 4px solid #333; }

/* ribbon panels */
.ribbon { display: flex; height: 99px; margin: 0 3px 0 2px; background: #3b4453; color: #7c8591; }
.panel { display: flex; flex-direction: column; border-right: 1px solid #2b323d; }
.panel:last-child { border-right: 0; }
.p-text { width: 302px; } .p-dim { width: 316px; } .p-center { width: 85px; } .p-leader { width: 260px; }
.p-table { width: 244px; } .p-mark { width: 104px; } .p-anno { width: 184px; }
.tools { display: flex; flex: 1; padding-right: 4px; }
.p-center .tools, .p-mark .tools { padding: 0; }
.stack { display: flex; flex-direction: column; gap: 4px; padding-top: 8px; }
.stack.grow { flex: 1; min-width: 0; }
.stack.icons { width: 22px; gap: 8px; padding-top: 10px; }
.big { display: flex; flex-direction: column; align-items: center; padding-top: 7px; line-height: 17px; flex: none; position: relative; }
.big svg { width: 32px; height: 34px; margin-bottom: 3px; }
.big .strong { color: #8a929d; }
.big.side .caret { position: absolute; right: -1px; top: 60px; }
.p-text .big { width: 76px; } .p-dim .big { width: 42px; } .p-center .big { width: 41px; }
.p-leader .big { width: 57px; } .p-table .big { width: 41px; } .p-anno .big { width: 76px; }
.p-mark .big { width: 58px; } .p-mark .big.side { width: 42px; }
.p-anno .big.side .caret { right: 6px; }
.combo { position: relative; display: flex; align-items: center; height: 20px; background: #4a5666; border: 1px solid #343c49; color: #96a0ad; }
.combo select, .combo input { flex: 1; width: 100%; height: 18px; padding: 0 3px; appearance: none; }
.combo:has(select)::after { content: ""; position: absolute; right: 3px; top: 7px; border: 4px solid transparent; border-top: 5px solid #b8c0cb; border-bottom: 0; }
.combo.light { color: #bcc3cc; }
.combo.find { padding-right: 2px; }
.combo.swatch { flex: 1; }
.combo.swatch i { width: 16px; height: 16px; flex: none; background: #c8ccd4; border: 1px solid #111; margin-left: 1px; }
.line { display: flex; align-items: center; height: 20px; gap: 8px; padding-left: 4px; }
.line.tight { gap: 4px; padding-left: 1px; }
.line button { display: flex; align-items: center; gap: 5px; }
.line.dims { gap: 10px; padding-left: 3px; }
.p-anno .line { padding-left: 1px; }
.icongrid { display: grid; grid-template-columns: repeat(3, 16px); grid-auto-rows: 16px; gap: 8px; padding: 10px 3px 0 5px; }
.panel footer { display: flex; align-items: center; height: 19px; padding-right: 4px; color: #e3e6ea; }
.panel footer span { flex: 1; text-align: center; }
.panel footer .caret { margin: 0 0 2px 6px; border-width: 4px 4px 0; }
.panel footer svg { width: 8px; height: 8px; }

/* drawing tabs */
.doctabs { display: flex; height: 30px; padding: 4px 0 4px 18px; margin: 0 1px; border-bottom: 4px solid #3b4453; }
.doctabs a, .doctabs .add { display: flex; align-items: center; height: 22px; padding: 0 14px; }
.doctabs .start { width: 128px; background: #2c333f; border-radius: 10px 14px 0 0; }
.doctabs .active { width: 131px; padding: 0 21px 0 9px; justify-content: space-between; background: #3b4453; border-radius: 12px 14px 0 0; color: #fff; font-weight: 700; }
.doctabs .active i { font-style: normal; color: #b5bbc4; }
.doctabs .add { width: 22px; height: 18px; padding: 0 5px; margin-top: 2px; background: #2c333f; border-radius: 0 0 8px 8px; font-size: 16px; }

/* drawing area */
.canvas { position: relative; flex: 1; margin: 0 1px; background: #000; }
.viewcontrols { position: absolute; top: 9px; right: 10px; display: flex; gap: 8px; }
.viewcontrols svg { width: 12px; height: 12px; }
.viewcube { position: absolute; top: 36px; right: 13px; width: 140px; height: 180px; }
.viewcube text { fill: #c4c4c4; font-size: 18px; text-anchor: middle; }
.viewcube .face { fill: #55585f; font: 28px "Noto Sans CJK SC", sans-serif; }
.viewcube .wcs { fill: #3f3f48; font-size: 11px; }
.navbar { position: absolute; top: 236px; right: 4px; background: #434343; border-radius: 4px; }
.navbar svg { width: 32px; height: 212px; fill: none; stroke: #262626; }
.ucs { position: absolute; left: 14px; bottom: 21px; width: 76px; height: 70px; }

/* dialogs */
.dialog { position: absolute; background: #f0f0f0; color: #000; font-family: "Noto Sans Mono CJK SC", "Noto Sans CJK SC", monospace; }
.dialog header { display: flex; align-items: center; height: 30px; padding: 0 10px 0 8px; gap: 7px; background: #fff; font-family: "Noto Sans", "Noto Sans CJK SC", sans-serif; }
.dialog header h2 { flex: 1; font-size: 12px; font-weight: 400; }
.dialog header svg { width: 14px; height: 14px; }
.dialog header .x svg { width: 11px; height: 11px; }
.dialog .preview { background: #000; border: 1px solid #777; }
.preview path, .preview circle { fill: none; stroke: #fff; }
.preview .y { stroke: #b8952e; }
.preview .f { fill: #fff; stroke: none; }
.preview text { fill: #fff; font-family: "Liberation Mono", monospace; }
fieldset { border: 1px solid #dcdcdc; min-width: 0; }
legend { padding: 0 3px; margin-left: -3px; line-height: 12px; }
.drop-field { position: relative; display: flex; align-items: center; height: 20px; background: #e1e1e1; border: 1px solid #adadad; }
.drop-field select { flex: 1; width: 100%; height: 18px; padding: 0 3px; appearance: none; }
.drop-field::after { content: ""; position: absolute; right: 6px; top: 4px; width: 6px; height: 6px; border: solid #555; border-width: 0 1px 1px 0; transform: rotate(45deg); }
.drop-field.boxed::before { content: ""; width: 11px; height: 11px; margin-left: 4px; background: #fff; border: 1px solid #000; }
.side-buttons button, .actions button, .more { height: 20px; line-height: 16px; background: #e1e1e1; border: 1px solid #adadad; }
.actions { display: flex; justify-content: flex-end; }
.actions button { width: 73px; }
.actions .default { border: 2px solid #0078d7; line-height: 14px; }
.check { display: flex; align-items: center; gap: 3px; }
.dialog input[type=checkbox], .dialog input[type=radio] { width: 13px; height: 13px; flex: none; appearance: none; background: #fff; border: 1px solid #333; }
.dialog input[type=checkbox]:checked { border-color: #0078d7; }
.dialog input[type=checkbox]:checked::after { content: ""; display: block; width: 4px; height: 8px; margin: 0 0 0 3px; border: solid #0078d7; border-width: 0 1px 1px 0; transform: rotate(40deg); }
.dialog input[type=checkbox]:disabled { border-color: #ccc; }
.dialog input[type=checkbox]:disabled::after { border-color: #aaa; }
.dialog input[type=radio] { border-radius: 7px; }
.dialog input[type=radio]:checked { background: #222; border: 1px solid #333; box-shadow: inset 0 0 0 2px #fff; }
.muted { color: #6d6d6d; }

.manager { left: 434px; top: 157px; width: 519px; padding-bottom: 15px; }
.manager header { color: #8f8f8f; }
.cols { display: grid; grid-template-columns: 168px 222px 76px; column-gap: 18px; padding: 10px 0 0 12px; }
.manager .left p { line-height: 20px; }
.list { height: 182px; background: #fff; border: 1px solid #828790; padding: 1px 24px; }
.list span { padding: 0 1px; background: #f0f0f0; }
.lbl { display: block; line-height: 22px; }
.manager .check { height: 16px; margin-top: 7px; }
.mid { padding-top: 16px; }
.mid > p { line-height: 18px; margin-bottom: 6px; }
.mid .preview { width: 220px; height: 180px; margin-bottom: 4px; font-size: 13px; }
.mid fieldset { height: 60px; padding: 2px 7px; }
.mid fieldset p { padding-left: 3px; }
.side-buttons { display: flex; flex-direction: column; gap: 8px; width: 76px; padding-top: 41px; margin-left: -5px; }
.manager .actions { gap: 12px; padding-right: 10px; margin-top: 9px; }

.modify { left: 994px; top: 97px; width: 564px; padding-bottom: 10px; }
.tabs { display: flex; align-items: flex-end; height: 31px; padding-left: 8px; }
.tabs button { height: 18px; line-height: 15px; padding: 0 4px; min-width: 47px; text-align: left; border: 1px solid #dcdcdc; border-width: 1px 1px 0 0; background: #f0f0f0; }
.tabs button:nth-child(2) { width: 70px; }
.tabs .on { height: 20px; width: 50px; background: #fff; line-height: 14px; }
.tabs button:nth-child(6) { width: 58px; }
.page { display: grid; grid-template-columns: 274px 1fr; gap: 6px 8px; align-items: start; margin: 0 8px 0 6px; padding: 4px 5px 30px; background: #fff; border: 1px solid #dcdcdc; }
.row { display: flex; align-items: center; height: 29px; gap: 2px; }
.row label { flex: 1; }
.look { padding: 6px 7px 0; }
.place { padding: 3px 7px 13px; }
.align { padding: 0 7px 14px; width: 252px; }
.align label { display: flex; align-items: center; gap: 3px; height: 40px; padding-left: 3px; }
.row .drop-field { width: 159px; }
.row .drop-field:has(+ .more) { width: 132px; }
.more { width: 25px; }
.spin { display: flex; width: 71px; height: 21px; background: #fff; border: 1px solid #7a7a7a; padding: 1px; }
.spin input { flex: 1; padding-left: 2px; }
.spin span { width: 14px; display: flex; flex-direction: column; gap: 1px; }
.spin button { height: 8px; font-size: 6px; line-height: 6px; background: #f0f0f0; border: 1px solid #999; border-width: 0 1px 1px 0; }
.spin.off { border-color: #ccc; color: #777; }
.page .preview { width: 256px; height: 156px; margin-top: 3px; font-size: 9px; font-weight: 700; }
.page .preview text { text-anchor: middle; }
.modify .actions { gap: 23px; padding: 10px 7px 0; }
.tooltip { position: absolute; left: 201px; top: 273px; width: 346px; padding: 10px 8px; line-height: 17px; background: #f4f4f4b3; border: 1px solid #e0e0e0; box-shadow: 2px 2px 4px #0003; color: #8f8f8f; font-family: "Noto Sans", "Noto Sans CJK SC", sans-serif; }
.cursor { position: absolute; left: 164px; top: 239px; width: 13px; height: 20px; }

/* command line */
.command { position: absolute; left: 387px; right: 387px; bottom: 0; display: flex; flex-direction: column; align-items: flex-start; gap: 4px; font: 13px/16px "Noto Sans Mono CJK SC", "Noto Sans CJK SC", monospace; }
.command p { margin-left: 62px; padding: 0 2px; background: #4a4a4a; border-radius: 2px; }
.command .h1 { color: #a8a8a8; } .command .h2 { color: #ccc; } .command .h3 { color: #e8e8e8; background: #5a5a5a; }
.cmdline { display: flex; align-items: center; align-self: stretch; height: 26px; padding-right: 3px; background: #fff; color: #111; }
.grip { align-self: stretch; background: #2b313c; margin-right: 4px; }
.grip svg { width: 56px; height: 26px; }
.cmdline .dark { margin: 0 5px 0 3px; border-width: 4px 4px 0; }
.prompt { white-space: pre; }
.prompt button { background: #d6d6d6; border-radius: 2px; padding: 0 1px; margin-right: 5px; line-height: 18px; }
.prompt button:last-of-type { margin-right: 0; }
.prompt em { font-style: normal; color: #1a1ae0; }
.cmdline input { flex: 1; }

/* bottom bar */
.bottom { display: flex; justify-content: space-between; height: 26px; margin: 0 1px; border-top: 1px solid #3f4854; color: #e6e8eb; }
.layouts { display: flex; padding-left: 13px; }
.layouts a { height: 18px; line-height: 18px; padding: 0 10px; margin-right: 3px; background: #2d3541; color: #b7bdc6; border-radius: 0 0 8px 8px; }
.layouts .on { background: #3b4453; color: #fff; font-weight: 700; }
.layouts .plus { padding: 0 9px; }
.status { display: flex; align-items: center; gap: 2px; padding: 0 5px 0 25px; background: #3b4453; font-family: Roboto, "Noto Sans CJK SC", sans-serif; }
.status button { display: flex; align-items: center; justify-content: center; min-width: 24px; height: 22px; }
.coords { margin-right: 6px; }
.status .word { padding: 0 2px; }
.status .on { background: #5a8ac6; }
.g { display: flex; align-items: center; gap: 1px; }
.g:last-child { gap: 2px; }
.g .caret { margin: 0 3px; border-width: 5px 4px 0; }
.status .scale { gap: 9px; padding: 0 2px; }
.units button { gap: 10px; }
.units .caret { margin-left: 35px; }

/* overlays */
.watermark { position: absolute; right: 0; bottom: 0; width: 200px; height: 60px; pointer-events: none; font-family: "Noto Sans CJK SC", sans-serif; }
.watermark .main { font-size: 29px; font-weight: 900; opacity: .9; }
.watermark .blue { font-size: 23px; font-weight: 700; fill: #0d3458; }
.watermark .green { font: 700 15px "Noto Sans", sans-serif; fill: #1f6a3a; opacity: .6; }
.arrows { position: absolute; left: 0; top: 0; width: 1220px; height: 580px; pointer-events: none; fill: none; stroke: #f00c0c; stroke-width: 3; filter: drop-shadow(2px 2px 2px #0006); }
.arrows > path { marker-end: url(#head); }
.arrows marker path { stroke: none; }
```
